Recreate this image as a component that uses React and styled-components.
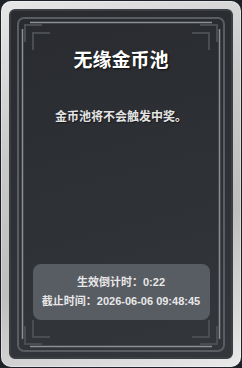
import React from "react";
import styled, { createGlobalStyle } from "styled-components";

const GlobalStyle = createGlobalStyle`
  html, body {
    margin: 0;
    padding: 0;
    background: #1d2128;
  }
  body {
    font-family: "Liberation Sans", "Noto Sans CJK SC", sans-serif;
  }
`;

const Card = styled.div`
  position: relative;
  box-sizing: border-box;
  margin: 1px;
  width: 240px;
  height: 366px;
  padding: 8px;
  border-radius: 10px;
  background: linear-gradient(
    160deg,
    #e6e6e6 0%,
    #c9c9c9 35%,
    #bebebe 65%,
    #e9e9e9 100%
  );
  box-shadow: inset 0 0 0 1px rgba(255, 255, 255, 0.35);
`;

const Panel = styled.div`
  box-sizing: border-box;
  height: 100%;
  display: flex;
  flex-direction: column;
  align-items: center;
  padding: 37px 0 37px;
  border: 2px solid #3b3e42;
  border-radius: 6px;
  background: linear-gradient(165deg, #292b2f 0%, #2e3136 55%, #33373c 100%);
`;

const Frame = styled.svg`
  position: absolute;
  top: 0;
  left: 0;
  pointer-events: none;
`;

const Title = styled.h1`
  margin: 0;
  font-size: 19px;
  line-height: 26px;
  font-weight: 700;
  color: #ffffff;
  letter-spacing: 0;
  text-shadow: 1px 1px 2px rgba(0, 0, 0, 0.7);
`;

const Notice = styled.p`
  margin: 35px 0 0;
  font-size: 12px;
  line-height: 16px;
  font-weight: 700;
  color: #e4e4e4;
  text-shadow: 1px 1px 1px rgba(0, 0, 0, 0.5);
`;

const InfoBox = styled.div`
  box-sizing: border-box;
  margin-top: auto;
  width: 177px;
  padding: 9px 0;
  border-radius: 8px;
  background: #585c63;
  display: flex;
  flex-direction: column;
  align-items: center;
`;

const InfoLine = styled.div`
  font-size: 11px;
  line-height: 19px;
  font-weight: 700;
  color: #e8e8e8;
  white-space: nowrap;
`;

const LINE = "#8c8f93";
const RIM = "#5a5d61";
const BRACKET = "#4a4d52";

const Decoration = () => (
  <Frame width="240" height="366" viewBox="1 1 240 366">
    <rect x="18" y="18" width="206" height="333" rx="6" fill="none" stroke={RIM} strokeWidth="2" />
    <line x1="30" y1="22.5" x2="212" y2="22.5" stroke={LINE} strokeWidth="1.5" />
    <line x1="30" y1="346.5" x2="212" y2="346.5" stroke={LINE} strokeWidth="1.5" />
    <line x1="22.5" y1="29" x2="22.5" y2="339" stroke={LINE} strokeWidth="1.5" />
    <line x1="219.5" y1="29" x2="219.5" y2="339" stroke={LINE} strokeWidth="1.5" />
    <g fill="none" stroke={BRACKET} strokeWidth="2">
      <path d="M25 42 V25 H42" />
      <path d="M33 50 V33 H50" />
      <path d="M200 25 H217 V42" />
      <path d="M192 33 H209 V50" />
      <path d="M25 326 V344 H42" />
      <path d="M33 320 V337 H50" />
      <path d="M200 344 H217 V326" />
      <path d="M192 337 H209 V320" />
    </g>
  </Frame>
);

const App = () => {
  return (
    <>
      <GlobalStyle />
      <Card>
        <Panel>
          <Title>无缘金币池</Title>
          <Notice>金币池将不会触发中奖。</Notice>
          <InfoBox>
            <InfoLine>生效倒计时：0:22</InfoLine>
            <InfoLine>截止时间：2026-06-06 09:48:45</InfoLine>
          </InfoBox>
        </Panel>
        <Decoration />
      </Card>
    </>
  );
};

export default App;
